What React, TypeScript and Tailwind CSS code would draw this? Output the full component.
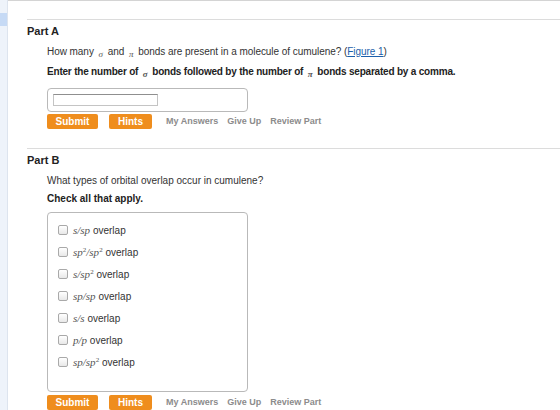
import React from "react";

const sans = "font-['Liberation_Sans',Arial,sans-serif]";

const Sym = ({ children }: { children: React.ReactNode }) => (
  <span className="relative top-[2px] mx-[2px] font-['Liberation_Serif',serif] text-[9px] italic tracking-normal text-[#555]">
    {children}
  </span>
);

const M = ({ children }: { children: React.ReactNode }) => (
  <span className="font-['Liberation_Serif',serif] text-[11px] italic text-[#555]">
    {children}
  </span>
);

const Sup = ({ children }: { children: React.ReactNode }) => (
  <sup className="-top-[4px] text-[7px] not-italic">{children}</sup>
);

const ActionBar = ({ className = "" }: { className?: string }) => (
  <div className={`flex items-center ${className}`}>
    <button className="h-[15px] w-[51px] rounded-[2px] bg-[#ef8d1d] text-[10px] leading-[15px] font-bold text-white">
      Submit
    </button>
    <button className="ml-[11px] h-[15px] w-[43px] rounded-[2px] bg-[#ef8d1d] text-[10px] leading-[15px] font-bold text-white">
      Hints
    </button>
    <div className="ml-[14px] flex gap-[9px] text-[9px] font-bold text-[#8c8c8c]">
      <span>My Answers</span>
      <span>Give Up</span>
      <span>Review Part</span>
    </div>
  </div>
);

const options: React.ReactNode[] = [
  <>
    <M>s/sp</M> overlap
  </>,
  <>
    <M>
      sp<Sup>2</Sup>/sp<Sup>2</Sup>
    </M>{" "}
    overlap
  </>,
  <>
    <M>
      s/sp<Sup>2</Sup>
    </M>{" "}
    overlap
  </>,
  <>
    <M>sp/sp</M> overlap
  </>,
  <>
    <M>s/s</M> overlap
  </>,
  <>
    <M>p/p</M> overlap
  </>,
  <>
    <M>
      sp/sp<Sup>2</Sup>
    </M>{" "}
    overlap
  </>,
];

export default function App() {
  return (
    <div className={`flex h-[410px] w-[560px] overflow-hidden bg-white text-[#333] ${sans}`}>
      <div className="w-[8px] shrink-0 border-r border-[#dde4ee] bg-[#eef3fa] pt-[13px]">
        <div className="h-[13px] bg-[#c6daf5]" />
      </div>

      <div className="flex-1 border-t border-[#d4d4d4] pl-[19px]">
        {/* Part A */}
        <div className="mt-[18px] border-t border-[#dcdcdc]">
          <h2 className="mt-[4px] h-[14px] text-[11px] leading-[14px] font-bold text-[#222]">Part A</h2>
          <div className="pl-[20px]">
            <p className="mt-[7px] h-[14px] text-[10px] leading-[14px] tracking-[-0.05px]">
              How many <Sym>σ</Sym> and <Sym>π</Sym> bonds are present in a molecule of cumulene? (
              <span className="text-[#1b5fab] underline">Figure 1</span>)
            </p>
            <p className="mt-[6px] h-[14px] text-[10px] leading-[14px] font-bold tracking-[-0.2px] text-[#222]">
              Enter the number of <Sym>σ</Sym> bonds followed by the number of <Sym>π</Sym> bonds separated by a comma.
            </p>
            <div className="mt-[9px] h-[24px] w-[201px] rounded-[4px] border border-[#b9b9b9] px-[5px] pt-[5px]">
              <div className="h-[12px] w-[105px] border border-[#c4c4c4] border-t-[#8f8f8f] bg-white" />
            </div>
            <ActionBar className="mt-[2px]" />
          </div>
        </div>

        {/* Part B */}
        <div className="mt-[19px] border-t border-[#dcdcdc]">
          <h2 className="mt-[4px] h-[14px] text-[11px] leading-[14px] font-bold text-[#222]">Part B</h2>
          <div className="pl-[20px]">
            <p className="mt-[7px] h-[14px] text-[10px] leading-[14px]">
              What types of orbital overlap occur in cumulene?
            </p>
            <p className="mt-[4px] h-[14px] text-[10px] leading-[14px] font-bold text-[#222]">
              Check all that apply.
            </p>
            <div className="mt-[6px] h-[180px] w-[201px] rounded-[4px] border border-[#b9b9b9] pt-[6px] pl-[10px]">
              {options.map((o, i) => (
                <div key={i} className="flex h-[22px] items-center text-[10px]">
                  <span className="mr-[5px] h-[10px] w-[10px] rounded-[2px] border border-[#a9a9a9] bg-gradient-to-b from-white to-[#e8e8e8]" />
                  <span>{o}</span>
                </div>
              ))}
            </div>
            <ActionBar className="mt-[3px]" />
          </div>
        </div>
      </div>
    </div>
  );
}
